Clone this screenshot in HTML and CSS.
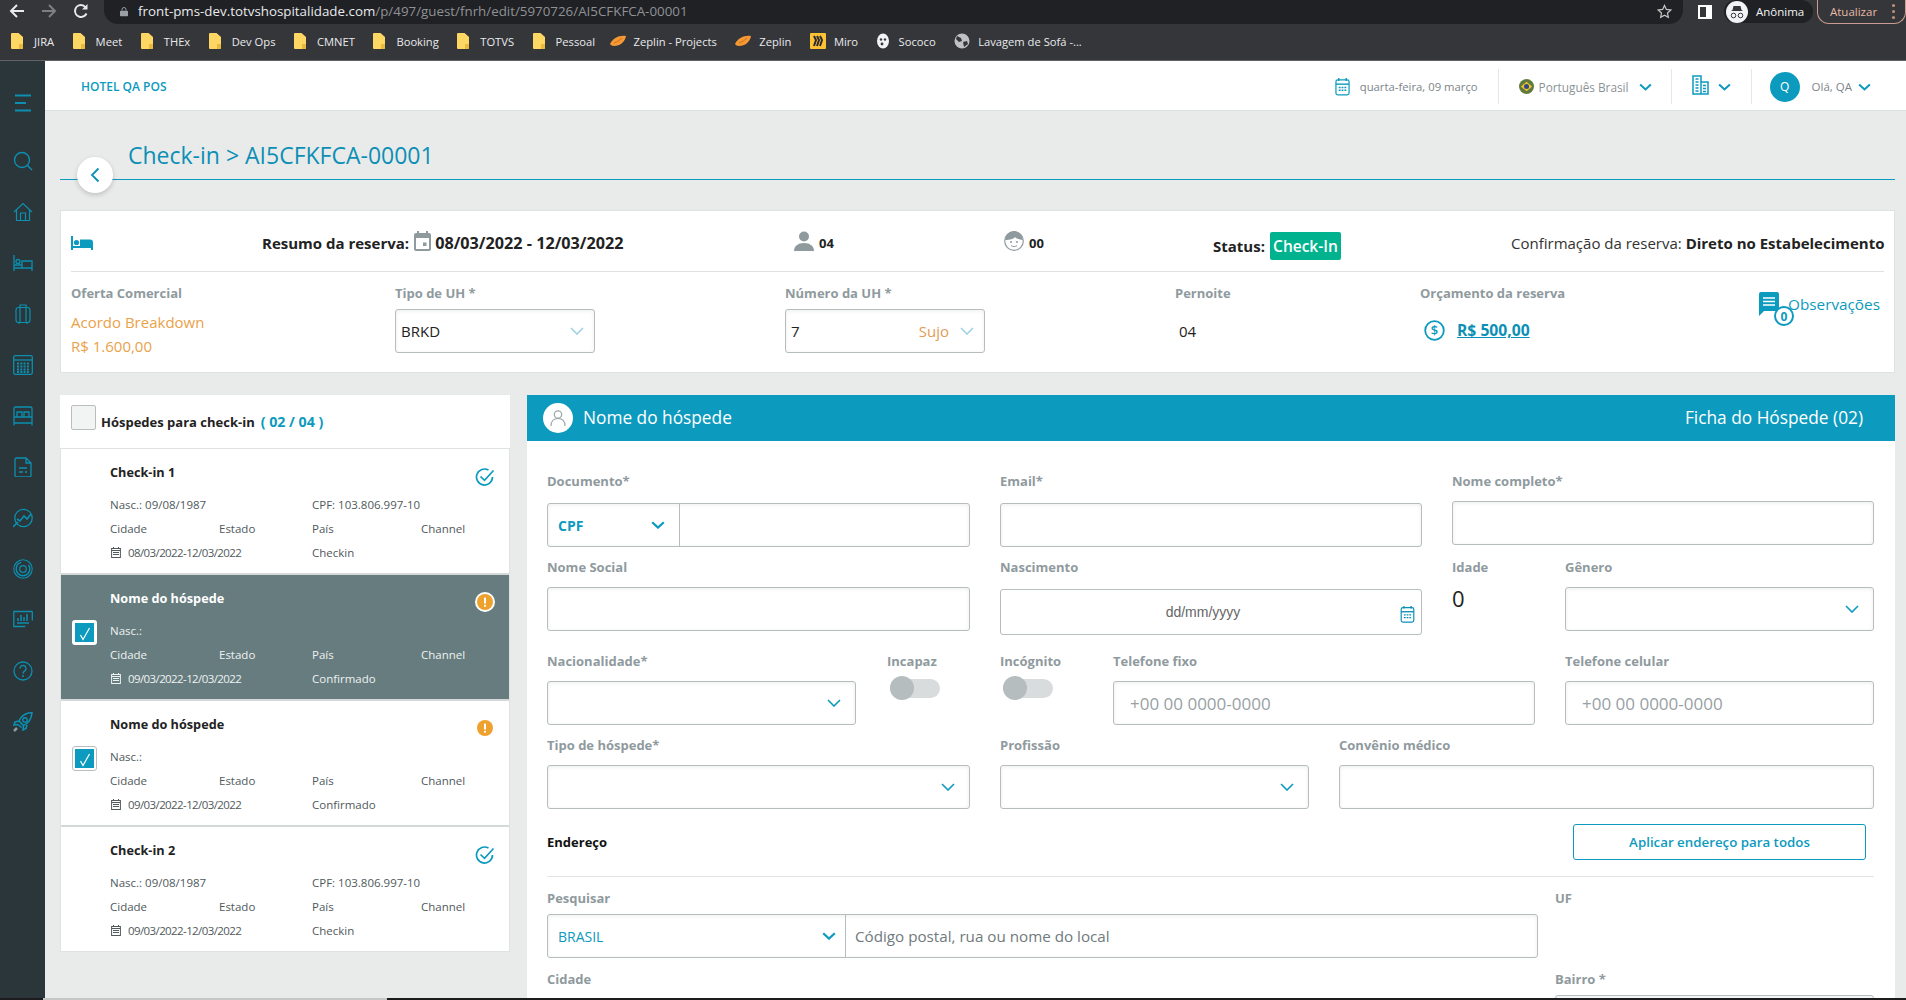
FILE: index.html
```html
<!DOCTYPE html>
<html lang="pt-BR">
<head>
<meta charset="utf-8">
<title>Check-in</title>
<link rel="stylesheet" href="styles.css">
</head>
<body>
<svg class="defs" xmlns="http://www.w3.org/2000/svg">
  <symbol id="chev" viewBox="0 0 14 8"><path d="M1 1l6 6 6-6" fill="none" stroke="currentColor" stroke-width="1.6"/></symbol>
  <symbol id="chevb" viewBox="0 0 14 8"><path d="M1.2 1.2L7 6.6l5.8-5.4" fill="none" stroke="currentColor" stroke-width="2.2"/></symbol>
  <symbol id="folder" viewBox="0 0 12 16"><path d="M0 1a1 1 0 011-1h6.500L12 4v11a1 1 0 01-1 1H1a1 1 0 01-1-1z" fill="#fdd663"/><path d="M8 16v-5h4v3a2 2 0 01-2 2z" fill="#e8b93c"/></symbol>
  <symbol id="zeplin" viewBox="0 0 16 12"><path d="M0 9C3 3 9 0 16 1c-1 6-6 10-12 10-2 0-3-1-4-2z" fill="#f69833"/><path d="M4 8c3-1 6-3 8-5" stroke="#c9701a" fill="none"/></symbol>
  <symbol id="cal" viewBox="0 0 16 20"><rect x="1" y="3" width="14" height="16" rx="2" fill="none" stroke="currentColor" stroke-width="1.300"/><path d="M1 7.500h14" stroke="currentColor" stroke-width="1.500"/><path d="M4 1v3M12 1v3" stroke="currentColor" stroke-width="1.500"/><path d="M4 11h2M7 11h2M10 11h2M4 14h2M7 14h2M10 14h2" stroke="currentColor" stroke-width="1.500"/></symbol>
  <symbol id="mini" viewBox="0 0 10 11"><rect x=".6" y="1.500" width="8.800" height="9" fill="none" stroke="currentColor"/><path d="M.5 3.500h9M2.500 0v2M7.500 0v2M2 5.500h6M2 7.500h6" stroke="currentColor"/></symbol>
  <symbol id="check" viewBox="0 0 20 20"><path d="M17.500 10a8 8 0 11-4-6.900" fill="none" stroke="#0c9abe" stroke-width="1.700"/><path d="M5.500 9.500l4 3.800L18.500 3.500" fill="none" stroke="#0c9abe" stroke-width="1.700"/></symbol>
  <symbol id="warn" viewBox="0 0 16 16"><circle cx="8" cy="8" r="8" fill="#efa12d"/><rect x="7" y="3.500" width="2" height="6" rx=".6" fill="#fff"/><rect x="7" y="10.700" width="2" height="2" rx=".6" fill="#fff"/></symbol>
  <symbol id="tick" viewBox="0 0 12 14"><path d="M1.500 8l2.500 4.500L10.500 1" fill="none" stroke="#fff" stroke-width="1.200"/></symbol>
</svg>

<div class="chrome">
  <div class="nav">
    <svg class="nav-ic" viewBox="0 0 16 16"><path d="M15 8H2M8 2L2 8l6 6" fill="none" stroke="#e8eaed" stroke-width="2"/></svg>
    <svg class="nav-ic dim" viewBox="0 0 16 16"><path d="M1 8h13M8 2l6 6-6 6" fill="none" stroke="#7d8083" stroke-width="2"/></svg>
    <svg class="nav-ic" viewBox="0 0 16 16"><path d="M13.500 10.500A6 6 0 118 2c2 0 3.500 1 4.500 2.300" fill="none" stroke="#e8eaed" stroke-width="2"/><path d="M14.500 1v5.500H9z" fill="#e8eaed"/></svg>
    <div class="urlbar">
      <svg class="lock" viewBox="0 0 10 12"><path d="M2.500 5V3.500a2.500 2.500 0 015 0V5" fill="none" stroke="#9aa0a6" stroke-width="1.200"/><rect y="5" width="10" height="7" rx="1" fill="#9aa0a6"/></svg>
      <span class="url"><span class="url-host">front-pms-dev.totvshospitalidade.com</span>/p/497/guest/fnrh/edit/5970726/AI5CFKFCA-00001</span>
      <svg class="star" viewBox="0 0 16 16"><path d="M8 1.500l2 4.300 4.700.6-3.500 3.200.9 4.700L8 12l-4.100 2.300.9-4.700L1.300 6.400 6 5.800z" fill="none" stroke="#c4c7c5" stroke-width="1.300"/></svg>
    </div>
    <svg class="panel-ic" viewBox="0 0 14 14"><rect width="14" height="14" fill="#fff"/><rect x="2" y="2" width="6" height="10" fill="#35363a"/></svg>
    <div class="incog">
      <svg class="incog-ic" viewBox="0 0 22 22"><circle cx="11" cy="11" r="11" fill="#f1f3f4"/><path d="M5 10h12l-1.500-1-1-4H7.500l-1 4z" fill="#35363a"/><circle cx="7.500" cy="14.500" r="2.300" fill="none" stroke="#35363a"/><circle cx="14.500" cy="14.500" r="2.300" fill="none" stroke="#35363a"/></svg>
      <span>Anônima</span>
    </div>
    <div class="update"><span>Atualizar</span><i class="dots"></i></div>
  </div>
  <div class="bookmarks">
    <span class="bm"><svg class="bm-f"><use href="#folder"/></svg>JIRA</span>
    <span class="bm"><svg class="bm-f"><use href="#folder"/></svg>Meet</span>
    <span class="bm"><svg class="bm-f"><use href="#folder"/></svg>THEx</span>
    <span class="bm"><svg class="bm-f"><use href="#folder"/></svg>Dev Ops</span>
    <span class="bm"><svg class="bm-f"><use href="#folder"/></svg>CMNET</span>
    <span class="bm"><svg class="bm-f"><use href="#folder"/></svg>Booking</span>
    <span class="bm"><svg class="bm-f"><use href="#folder"/></svg>TOTVS</span>
    <span class="bm"><svg class="bm-f"><use href="#folder"/></svg>Pessoal</span>
    <span class="bm bm-first"><svg class="bm-z"><use href="#zeplin"/></svg>Zeplin - Projects</span>
    <span class="bm"><svg class="bm-z"><use href="#zeplin"/></svg>Zeplin</span>
    <span class="bm"><svg class="bm-z" viewBox="0 0 16 16"><rect width="16" height="16" rx="1" fill="#ffc233"/><path d="M4 3l2 4-2 6M7 3l2 4-2 6M10 3l2 4-2 6" fill="none" stroke="#2b2a33" stroke-width="2"/></svg>Miro</span>
    <span class="bm"><svg class="bm-s" viewBox="0 0 12 16"><ellipse cx="6" cy="8" rx="6" ry="7.500" fill="#f1f3f4"/><circle cx="4" cy="6.500" r="1.200" fill="#35363a"/><circle cx="8" cy="6.500" r="1.200" fill="#35363a"/><circle cx="5" cy="11" r="1.400" fill="#35363a"/></svg>Sococo</span>
    <span class="bm"><svg class="bm-z" viewBox="0 0 16 16"><circle cx="8" cy="8" r="7.500" fill="#bdc1c6"/><path d="M3 3l4 2 1 3-3 1-3-3zM9 9l4-1 1 3-4 3z" fill="#35363a"/></svg>Lavagem de Sofá -...</span>
  </div>
</div>

<div class="app">
  <nav class="rail">
    <svg class="rail-ic" viewBox="0 0 20 20"><path d="M2 2.500h16M2 10h11M2 17.500h16" fill="none" stroke="currentColor" stroke-width="1.800"/></svg>
    <svg class="rail-ic rail-search" viewBox="0 0 20 20"><circle cx="9" cy="9" r="7.500" fill="none" stroke="currentColor" stroke-width="1.400"/><path d="M14.500 14.500l4.500 4.500" stroke="currentColor" stroke-width="1.400"/></svg>
    <svg class="rail-ic" viewBox="0 0 20 20"><path d="M1 10l9-8.500 9 8.500M3.500 8v10.500h13V8M7.500 18.500V11h5v7.500" fill="none" stroke="currentColor" stroke-width="1.200"/></svg>
    <svg class="rail-ic" viewBox="0 0 20 20"><path d="M1 2v16M1 15h18v3M19 15V8H9v7M1 12h8" fill="none" stroke="currentColor" stroke-width="1.300"/><circle cx="5" cy="8.500" r="2" fill="none" stroke="currentColor" stroke-width="1.300"/></svg>
    <svg class="rail-ic" viewBox="0 0 20 20"><rect x="3" y="3.500" width="14" height="15" rx="2.500" fill="none" stroke="currentColor" stroke-width="1.200"/><path d="M7 3.500V1h6v2.500M7 3.500v15M13 3.500v15M6 19v1M14 19v1" fill="none" stroke="currentColor" stroke-width="1.200"/></svg>
    <svg class="rail-ic" viewBox="0 0 20 20"><rect x=".7" y=".7" width="18.600" height="18.600" rx="1.500" fill="none" stroke="currentColor" stroke-width="1.300"/><path d="M1 5h18" stroke="currentColor" stroke-width="1.300"/><path d="M4 8.500h12M4 11.500h12M4 14.500h12M4 17h12" stroke="currentColor" stroke-width="1.800" stroke-dasharray="2 1.300"/></svg>
    <svg class="rail-ic" viewBox="0 0 20 20"><path d="M1 11V2.500A1.500 1.500 0 012.500 1h15A1.500 1.500 0 0119 2.500V11M1 11h18v6H1zM1 17v2.500M19 17v2.500M4 11V6h5v5M11 11V6h5v5" fill="none" stroke="currentColor" stroke-width="1.300"/></svg>
    <svg class="rail-ic" viewBox="0 0 20 20"><path d="M2 2.500A1.500 1.500 0 013.500 1H13l5 5v12.500a1.500 1.500 0 01-1.500 1.500h-13A1.500 1.500 0 012 18.500zM13 1v5h5M6 11h8M6 15h4M12 15h2" fill="none" stroke="currentColor" stroke-width="1.300"/></svg>
    <svg class="rail-ic" viewBox="0 0 20 20"><circle cx="10.500" cy="10" r="8.700" fill="none" stroke="currentColor" stroke-width="1.300"/><path d="M0 19l5-5M4 11l3 2 4-5 3 3 4-5" fill="none" stroke="currentColor" stroke-width="1.600"/></svg>
    <svg class="rail-ic" viewBox="0 0 20 20"><circle cx="10" cy="10" r="9.200" fill="none" stroke="currentColor" stroke-width="1.100"/><circle cx="10" cy="10" r="6.800" fill="none" stroke="currentColor" stroke-width="1.400" stroke-dasharray="30 8"/><circle cx="10" cy="10" r="3.300" fill="none" stroke="currentColor" stroke-width="1.200"/></svg>
    <svg class="rail-ic" viewBox="0 0 20 20"><path d="M19.500 1.500H.8v15h11.500M19.300 1.500v9" fill="none" stroke="currentColor" stroke-width="1.300"/><path d="M4 13h12M5 11V8M8 11V5M11 11V7M14 11V4" fill="none" stroke="currentColor" stroke-width="1.500"/></svg>
    <svg class="rail-ic" viewBox="0 0 20 20"><circle cx="10" cy="10" r="9" fill="none" stroke="currentColor" stroke-width="1.300"/><path d="M7 7.500a3 3 0 115 2.200c-1.300.9-2 1.500-2 3" fill="none" stroke="currentColor" stroke-width="1.400"/><circle cx="10" cy="15" r="1" fill="currentColor"/></svg>
    <svg class="rail-ic" viewBox="0 0 20 20"><path d="M6 9c2-5 7-8 13-8.500-.5 6-3.500 11-8.500 13zM6 9L2 10l-1 3 4-.5M10.500 13.500L10 18l3-1.500 1-3.500M5 12.500l3.500 3" fill="none" stroke="currentColor" stroke-width="1.600"/><circle cx="12" cy="8" r="2.200" fill="none" stroke="currentColor" stroke-width="1.400"/><path d="M1 19l3-3" stroke="#8a9aa0" stroke-width="2.500"/></svg>
  </nav>

  <div class="workspace">
    <header class="topbar">
      <div class="hotel">HOTEL QA POS</div>
      <div class="top-right">
        <div class="top-item top-date">
          <svg class="top-cal"><use href="#cal"/></svg>
          <span>quarta-feira, 09 março</span>
        </div>
        <div class="top-item top-lang">
          <svg class="flag" viewBox="0 0 16 16"><circle cx="8" cy="8" r="8" fill="#5f7a3a"/><path d="M8 3l6 5-6 5-6-5z" fill="#f2c230"/><circle cx="8" cy="8" r="2.700" fill="#2c4a85"/></svg>
          <span class="lang">Português Brasil</span>
          <svg class="top-chev"><use href="#chevb"/></svg>
        </div>
        <div class="top-item top-prop">
          <svg class="bld" viewBox="0 0 17 20"><path d="M1 19V1h8v18zM9 7h7v12H9M3.500 4h3M3.500 7h3M3.500 10h3M3.500 13h3M3.500 16h3M11 10.500h3M11 13.500h3M11 16.500h3" fill="none" stroke="currentColor" stroke-width="1.500"/></svg>
          <svg class="top-chev"><use href="#chevb"/></svg>
        </div>
        <div class="top-user">
          <span class="avatar">Q</span>
          <span class="hello">Olá, QA</span>
          <svg class="top-chev"><use href="#chevb"/></svg>
        </div>
      </div>
    </header>

    <main class="main">
      <div class="page-head">
        <h1 class="page-title">Check-in &gt; AI5CFKFCA-00001</h1>
        <button class="back" type="button" aria-label="Voltar"><svg viewBox="0 0 10 16"><path d="M8.500 1.500L2 8l6.500 6.500" fill="none" stroke="#0c8fb5" stroke-width="1.800"/></svg></button>
      </div>

      <section class="summary">
        <div class="sum-top">
          <svg class="sum-bed" viewBox="0 0 22 14"><path d="M1 0v14M1 11h20v3M21 11V6.500a2 2 0 00-2-2h-9v6.500" fill="none" stroke="#0c9abe" stroke-width="2"/><path d="M10 5h10v6H10z" fill="#0c9abe"/><circle cx="5.500" cy="6.500" r="2.600" fill="#0c9abe"/></svg>
          <div class="sum-res">
            <strong>Resumo da reserva:</strong>
            <svg class="sum-cal" viewBox="0 0 17 20"><rect y="2" width="17" height="18" rx="2" fill="#8f9a9e"/><rect x="2" y="7" width="13" height="11" fill="#fff"/><rect x="9" y="11.500" width="3.500" height="3.500" fill="#8f9a9e"/><rect x="3" width="2" height="4" fill="#8f9a9e"/><rect x="12" width="2" height="4" fill="#8f9a9e"/></svg>
            <strong class="sum-dates">08/03/2022 - 12/03/2022</strong>
          </div>
          <div class="sum-pax">
            <svg class="pax" viewBox="0 0 20 20"><circle cx="10" cy="5.500" r="5" fill="#8f9a9e"/><path d="M0 20c0-5 4-8 10-8s10 3 10 8z" fill="#8f9a9e"/></svg>
            <strong>04</strong>
          </div>
          <div class="sum-pax">
            <svg class="pax" viewBox="0 0 20 20"><circle cx="10" cy="10" r="9.300" fill="#fff" stroke="#8f9a9e" stroke-width="1.200"/><path d="M1 9C2 3 6 .5 10 .5S18 3 19 9c-3 0-6-1-8-3-1 2-5 3-10 3z" fill="#8f9a9e"/><circle cx="7" cy="11" r="1" fill="#8f9a9e"/><circle cx="13" cy="11" r="1" fill="#8f9a9e"/><path d="M7 14.500c2 1.500 4 1.500 6 0" fill="none" stroke="#8f9a9e"/></svg>
            <strong>00</strong>
          </div>
          <div class="sum-status"><strong>Status:</strong><span class="badge">Check-In</span></div>
          <div class="sum-conf">Confirmação da reserva: <strong>Direto no Estabelecimento</strong></div>
        </div>
        <div class="sum-bottom">
          <div>
            <div class="lab">Oferta Comercial</div>
            <div class="offer">Acordo Breakdown<br>R$ 1.600,00</div>
          </div>
          <div>
            <div class="lab">Tipo de UH *</div>
            <div class="ctl ctl-uh"><span>BRKD</span><svg class="chv pale"><use href="#chev"/></svg></div>
          </div>
          <div>
            <div class="lab">Número da UH *</div>
            <div class="ctl ctl-uh"><span>7</span><span class="dirty">Sujo</span><svg class="chv pale"><use href="#chev"/></svg></div>
          </div>
          <div>
            <div class="lab">Pernoite</div>
            <div class="nights">04</div>
          </div>
          <div>
            <div class="lab">Orçamento da reserva</div>
            <div class="budget">
              <svg class="dollar" viewBox="0 0 21 21"><circle cx="10.500" cy="10.500" r="9.300" fill="none" stroke="#0c9abe" stroke-width="1.800"/><text x="10.500" y="15" text-anchor="middle" class="dollar-t">$</text></svg>
              <a class="budget-v" href="#">R$ 500,00</a>
            </div>
          </div>
          <div class="obs">
            <svg class="obs-ic" viewBox="0 0 20 24"><path d="M2 0h16a2 2 0 012 2v15a2 2 0 01-2 2H5l-5 5V2a2 2 0 012-2z" fill="#0c9abe"/><path d="M4 6h12M4 9.500h12M4 13h12" stroke="#fff" stroke-width="1.600"/></svg>
            <span class="obs-badge">0</span>
            <span class="obs-t">Observações</span>
          </div>
        </div>
      </section>

      <div class="content">
        <aside class="guests">
          <div class="guests-head">
            <span class="box"></span>
            <strong>Hóspedes para check-in</strong>
            <strong class="count">( 02 / 04 )</strong>
          </div>
          <div class="guest-list">
            <article class="guest">
              <div class="g-sel"></div>
              <div class="g-body">
                <div class="g-title">Check-in 1</div>
                <div class="g-grid">
                  <span class="g-two">Nasc.: 09/08/1987</span><span class="g-two">CPF: 103.806.997-10</span>
                  <span>Cidade</span><span>Estado</span><span>País</span><span>Channel</span>
                  <span class="g-two g-date"><svg class="g-cal"><use href="#mini"/></svg>08/03/2022-12/03/2022</span><span class="g-two">Checkin</span>
                </div>
              </div>
              <div class="g-state"><svg class="st"><use href="#check"/></svg></div>
            </article>
            <article class="guest guest-on">
              <div class="g-sel"><span class="cb cb-on"><svg><use href="#tick"/></svg></span></div>
              <div class="g-body">
                <div class="g-title">Nome do hóspede</div>
                <div class="g-grid">
                  <span class="g-two">Nasc.:</span><span class="g-two">&nbsp;</span>
                  <span>Cidade</span><span>Estado</span><span>País</span><span>Channel</span>
                  <span class="g-two g-date"><svg class="g-cal"><use href="#mini"/></svg>09/03/2022-12/03/2022</span><span class="g-two">Confirmado</span>
                </div>
              </div>
              <div class="g-state"><span class="warn-ring"><svg><use href="#warn"/></svg></span></div>
            </article>
            <article class="guest">
              <div class="g-sel"><span class="cb"><svg><use href="#tick"/></svg></span></div>
              <div class="g-body">
                <div class="g-title">Nome do hóspede</div>
                <div class="g-grid">
                  <span class="g-two">Nasc.:</span><span class="g-two">&nbsp;</span>
                  <span>Cidade</span><span>Estado</span><span>País</span><span>Channel</span>
                  <span class="g-two g-date"><svg class="g-cal"><use href="#mini"/></svg>09/03/2022-12/03/2022</span><span class="g-two">Confirmado</span>
                </div>
              </div>
              <div class="g-state"><svg class="st-warn"><use href="#warn"/></svg></div>
            </article>
            <article class="guest guest-last">
              <div class="g-sel"></div>
              <div class="g-body">
                <div class="g-title">Check-in 2</div>
                <div class="g-grid">
                  <span class="g-two">Nasc.: 09/08/1987</span><span class="g-two">CPF: 103.806.997-10</span>
                  <span>Cidade</span><span>Estado</span><span>País</span><span>Channel</span>
                  <span class="g-two g-date"><svg class="g-cal"><use href="#mini"/></svg>09/03/2022-12/03/2022</span><span class="g-two">Checkin</span>
                </div>
              </div>
              <div class="g-state"><svg class="st"><use href="#check"/></svg></div>
            </article>
          </div>
        </aside>

        <section class="form">
          <div class="form-head">
            <span class="form-av"><svg viewBox="0 0 18 18"><circle cx="9" cy="5.500" r="3.700" fill="none" stroke="#9aa5a9" stroke-width="1.200"/><path d="M2 17c0-5 3-7.500 7-7.500s7 2.500 7 7.500" fill="none" stroke="#9aa5a9" stroke-width="1.200"/></svg></span>
            <span class="form-name">Nome do hóspede</span>
            <span class="form-ficha">Ficha do Hóspede (02)</span>
          </div>
          <div class="form-body">
            <div class="row row-1">
              <div>
                <label class="lab">Documento*</label>
                <div class="ctl ctl-doc m13">
                  <div class="seg seg-doc"><b class="teal">CPF</b><svg class="chv teal"><use href="#chevb"/></svg></div>
                  <input class="inp-bare" type="text">
                </div>
              </div>
              <div>
                <label class="lab">Email*</label>
                <input class="inp m13" type="text">
              </div>
              <div>
                <label class="lab">Nome completo*</label>
                <input class="inp m11" type="text">
              </div>
            </div>
            <div class="row row-2">
              <div>
                <label class="lab">Nome Social</label>
                <input class="inp m11" type="text">
              </div>
              <div>
                <label class="lab">Nascimento</label>
                <div class="ctl ctl-date m13"><span class="date-ph">dd/mm/yyyy</span><svg class="date-ic"><use href="#cal"/></svg></div>
              </div>
              <div class="sub-age">
                <div>
                  <label class="lab">Idade</label>
                  <div class="age">0</div>
                </div>
                <div>
                  <label class="lab">Gênero</label>
                  <div class="ctl ctl-sel m11"><svg class="chv teal"><use href="#chev"/></svg></div>
                </div>
              </div>
            </div>
            <div class="row row-3">
              <div>
                <label class="lab">Nacionalidade*</label>
                <div class="ctl ctl-sel m11"><svg class="chv teal"><use href="#chev"/></svg></div>
              </div>
              <div class="col-incapaz">
                <label class="lab">Incapaz</label>
                <div class="toggle"></div>
              </div>
              <div>
                <label class="lab">Incógnito</label>
                <div class="toggle"></div>
              </div>
              <div>
                <label class="lab">Telefone fixo</label>
                <input class="inp inp-ph m11" type="text" placeholder="+00 00 0000-0000">
              </div>
              <div>
                <label class="lab">Telefone celular</label>
                <input class="inp inp-ph m11" type="text" placeholder="+00 00 0000-0000">
              </div>
            </div>
            <div class="row row-4">
              <div>
                <label class="lab">Tipo de hóspede*</label>
                <div class="ctl ctl-sel m11"><svg class="chv teal"><use href="#chev"/></svg></div>
              </div>
              <div>
                <label class="lab">Profissão</label>
                <div class="ctl ctl-sel m11"><svg class="chv teal"><use href="#chev"/></svg></div>
              </div>
              <div>
                <label class="lab">Convênio médico</label>
                <input class="inp m11" type="text">
              </div>
            </div>
            <div class="addr-head">
              <strong>Endereço</strong>
              <button class="apply" type="button">Aplicar endereço para todos</button>
            </div>
            <div class="row row-5">
              <div>
                <label class="lab">Pesquisar</label>
                <div class="ctl ctl-doc m7">
                  <div class="seg seg-br"><span class="teal">BRASIL</span><svg class="chv teal"><use href="#chevb"/></svg></div>
                  <input class="inp-bare inp-addr" type="text" placeholder="Código postal, rua ou nome do local">
                </div>
              </div>
              <div>
                <label class="lab">UF</label>
              </div>
            </div>
            <div class="row row-5 row-6">
              <div>
                <label class="lab">Cidade</label>
              </div>
              <div>
                <label class="lab">Bairro *</label>
                <input class="inp inp-bairro m7" type="text">
              </div>
            </div>
          </div>
        </section>
      </div>
    </main>
  </div>
</div>
<div class="taskbar"><span class="task-on"></span></div>
</body>
</html>
```
FILE: styles.css
```css
* { box-sizing: border-box; }
html, body { margin: 0; height: 1000px; overflow: hidden; }
body { font-family: "Open Sans", "Liberation Sans", sans-serif; color: #222; background: #e9ebeb; display: flex; flex-direction: column; position: relative; }
.defs { display: none; }

/* browser chrome */
.chrome { height: 61px; flex: none; background: #35363a; border-bottom: 1px solid #5f6368; font-family: "Open Sans", sans-serif; }
.nav { height: 24px; display: flex; align-items: flex-start; }
.nav-ic { width: 16px; height: 16px; margin: 3px 16px 0 0; flex: none; }
.nav-ic:first-child { margin-left: 9px; }
.urlbar { width: 1579px; height: 24px; margin-left: -1px; margin-right: 15px; background: #202124; border-radius: 0 0 14px 14px; display: flex; align-items: center; padding: 0 11px 0 16px; flex: none; }
.lock { width: 8px; height: 11px; flex: none; margin-right: 10px; margin-top: -2px; }
.url { font-size: 13.350px; color: #8f9296; flex: 1; white-space: nowrap; margin-top: -2px; }
.url-host { color: #e8eaed; }
.star { width: 15px; height: 15px; flex: none; margin-top: -2px; }
.panel-ic { width: 14px; height: 14px; margin-top: 5px; flex: none; }
.incog { margin-left: 12px; width: 89px; height: 23px; background: #202124; border-radius: 12px; display: flex; align-items: center; color: #f1f3f4; font-size: 11.500px; padding-left: 2px; flex: none; }
.incog-ic { width: 22px; height: 22px; margin-right: 8px; }
.update { margin-left: 4px; flex: 1; height: 24px; border: 1px solid #c99d91; border-radius: 0 0 12px 12px; border-top: 0; display: flex; align-items: center; padding-left: 12px; color: #e6b8a6; font-size: 11.500px; justify-content: space-between; padding-right: 10px; }
.dots { width: 3px; height: 3px; border-radius: 50%; background: #c08f80; box-shadow: 0 -6px 0 #c08f80, 0 6px 0 #c08f80; }
.bookmarks { height: 36px; display: flex; align-items: center; gap: 18.500px; padding-left: 11px; padding-bottom: 2px; color: #e8eaed; font-size: 11.200px; white-space: nowrap; }
.bm { display: flex; align-items: center; }
.bm-first { margin-left: -4px; }
.bm-f { width: 12px; height: 16px; margin-right: 11px; flex: none; }
.bm-z { width: 16px; height: 16px; margin-right: 8px; flex: none; }
.bm-s { width: 12px; height: 16px; margin-right: 10px; flex: none; }

/* app frame */
.app { flex: 1; min-height: 0; display: flex; }
.rail { width: 45px; flex: none; background: #2a3639; color: #0c8fb0; display: flex; flex-direction: column; align-items: center; padding-top: 32px; gap: 31px; }
.rail-ic { width: 20px; height: 20px; flex: none; }
.rail-search { margin-top: 7px; }
.workspace { flex: 1; min-width: 0; display: flex; flex-direction: column; }
.topbar { height: 50px; flex: none; background: #fff; border-bottom: 1px solid #dfe2e2; display: flex; align-items: center; justify-content: space-between; padding-left: 36px; padding-right: 35px; }
.hotel { font-size: 12px; font-weight: 600; color: #0c9abe; margin-top: 1px; }
.top-right { display: flex; align-items: center; height: 35px; margin-top: 2px; }
.top-item { display: flex; align-items: center; height: 35px; border-right: 1px solid #e6e8e8; font-size: 11.300px; color: #7c8589; }
.top-date { padding-right: 20px; }
.top-cal { width: 15px; height: 19px; color: #0c9abe; margin-right: 10px; }
.top-lang { padding-left: 20px; padding-right: 19px; font-size: 11.800px; }
.flag { width: 15px; height: 15px; margin-right: 5px; }
.lang { margin-right: 10px; color: #8a9396; }
.top-chev { width: 13px; height: 8px; color: #0c9abe; flex: none; }
.top-prop { padding-left: 20px; padding-right: 20px; }
.bld { width: 17px; height: 20px; color: #0c9abe; margin-right: 9px; margin-top: -4px; }
.top-user { display: flex; align-items: center; padding-left: 18px; font-size: 11.500px; color: #7c8589; }
.avatar { width: 30px; height: 30px; border-radius: 50%; background: #0c9abe; color: #fff; display: flex; align-items: center; justify-content: center; font-size: 12px; margin-right: 12px; }
.hello { margin-right: 6px; }

/* main */
.main { flex: 1; min-height: 0; overflow: hidden; padding: 0 11px 0 15px; }
.page-head { position: relative; padding: 30px 0 9px 68px; border-bottom: 1px solid #0c9abe; margin-bottom: 30px; height: 69px; }
.page-title { margin: 0; font-size: 23px; line-height: 29px; font-weight: 400; color: #0c8fb5; }
.back { position: absolute; left: 17px; top: 46px; width: 36px; height: 36px; border-radius: 50%; border: 0; background: #fff; box-shadow: 0 2px 5px rgba(0,0,0,.18); padding: 0; display: flex; align-items: center; justify-content: center; }
.back svg { width: 10px; height: 16px; }

.summary { background: #fff; border: 1px solid #dfe2e2; padding: 0 10px; height: 163px; margin-bottom: 22px; }
.sum-top { height: 61px; padding-top: 4px; border-bottom: 1px solid #dfe2e2; display: grid; grid-template-columns: 191px 532px 210px 209px 298px 1fr; align-items: center; font-size: 15px; white-space: nowrap; }
.sum-bed { width: 22px; height: 14px; }
.sum-res { display: flex; align-items: center; }
.sum-cal { width: 17px; height: 20px; margin: -4px 4px 0 5px; }
.sum-res .sum-dates { font-size: 16.200px; font-weight: 700; }
.sum-pax { display: flex; align-items: center; font-size: 13px; }
.pax { width: 20px; height: 20px; margin: -4px 5px 0 0; }
.sum-status { display: flex; align-items: center; margin-top: 6px; gap: 5px; }
.badge { height: 28px; width: 71px; border-radius: 2px; background: #00b28e; color: #fff; font-size: 15.500px; font-weight: 600; display: flex; align-items: center; justify-content: center; }
.sum-conf { justify-self: end; font-size: 15px; color: #333; }
.sum-conf strong { color: #222; }
.sum-bottom { display: grid; grid-template-columns: 324px 390px 390px 245px 339px 1fr; padding-top: 12px; }
.lab { display: block; font-size: 13px; line-height: 18px; font-weight: 700; color: #8f9a9e; white-space: nowrap; }
.offer { margin-top: 8px; font-size: 15px; line-height: 24px; color: #eaa24a; }
.ctl { display: flex; align-items: center; height: 44px; background: #fff; border: 1px solid #b6bdbf; border-radius: 3px; box-shadow: inset 0 1px 4px rgba(0,0,0,.07); }
.ctl-uh { width: 200px; margin-top: 7px; padding: 0 10px 0 5px; font-size: 15px; }
.ctl-uh span:first-child { flex: 1; }
.dirty { color: #e29c55; margin-right: 11px; }
.chv { width: 14px; height: 8px; flex: none; }
.pale { color: #9fd2e4; }
.teal { color: #0c9abe; }
.nights { margin-top: 7px; height: 44px; line-height: 44px; padding-left: 4px; font-size: 15px; }
.budget { margin-top: 6px; height: 44px; display: flex; align-items: center; padding-left: 4px; }
.dollar { width: 21px; height: 21px; margin-right: 12px; }
.dollar-t { font-size: 13px; font-weight: 600; fill: #0c9abe; font-family: "Open Sans", sans-serif; }
.budget-v { font-size: 15.700px; font-weight: 700; color: #0c8fb5; }
.obs { position: relative; display: flex; padding-top: 7px; }
.obs-ic { width: 20px; height: 24px; flex: none; margin-top: 1px; }
.obs-t { margin-left: 9px; font-size: 15.300px; line-height: 26px; color: #0c9abe; white-space: nowrap; }
.obs-badge { position: absolute; left: 15px; top: 22px; width: 20px; height: 20px; border-radius: 50%; background: #fff; border: 2.500px solid #0c9abe; color: #0c9abe; font-size: 12px; font-weight: 700; display: flex; align-items: center; justify-content: center; }

/* guests */
.content { display: flex; gap: 17px; align-items: flex-start; }
.guests { width: 450px; flex: none; }
.guests-head { height: 53px; background: #fff; display: flex; align-items: flex-start; padding: 10px 0 0 11px; font-size: 13px; line-height: 34px; }
.box { width: 25px; height: 25px; background: #f2f3f3; border: 1px solid #b9bfc1; border-radius: 2px; margin-right: 5px; flex: none; }
.count { color: #0c9abe; margin-left: 6px; font-size: 14.200px; }
.guest-list { border: 1px solid #dfe2e2; background: #fff; }
.guest { display: grid; grid-template-columns: 49px 361px 1fr; height: 126px; border-bottom: 2px solid #d5d8d8; font-size: 11.500px; color: #50595c; }
.guest-last { border-bottom: 0; height: 124px; }
.guest-on { background: #667c7e; color: #eef2f2; }
.g-sel { padding: 45px 0 0 11px; }
.cb { display: flex; align-items: center; justify-content: center; width: 25px; height: 25px; background: #0c9abe; border: 3px solid #fff; outline: 1px solid #b9bfc1; outline-offset: -1px; border-radius: 3px; }
.cb svg { width: 12px; height: 14px; margin-top: 3px; }
.cb-on { outline: 0; }
.g-body { padding-top: 14px; }
.g-title { font-size: 12.700px; font-weight: 700; line-height: 18px; margin-bottom: 11px; color: #222; }
.guest-on .g-title { color: #fff; }
.g-grid { display: grid; grid-template-columns: 109px 93px 109px 50px; grid-auto-rows: 24px; align-items: center; white-space: nowrap; }
.g-two { grid-column: span 2; display: flex; align-items: center; }
.g-date { letter-spacing: -.6px; }
.g-cal { width: 10px; height: 11px; margin: 0 7px 0 1px; flex: none; }
.g-state { padding: 18px 0 0 4px; }
.st { width: 20px; height: 20px; display: block; }
.warn-ring { display: block; width: 20px; height: 20px; margin-top: -1px; background: #fff; border-radius: 50%; padding: 2px; }
.warn-ring svg { width: 16px; height: 16px; display: block; }
.st-warn { width: 16px; height: 16px; display: block; margin: 1px 0 0 2px; }

/* form */
.form { flex: 1; min-width: 0; background: #fff; height: 605px; }
.form-head { height: 46px; background: #0c9abe; color: #fff; display: flex; align-items: center; padding: 0 32px 2px 16px; font-size: 17.300px; }
.form-av { width: 30px; height: 30px; border-radius: 50%; background: #fff; display: flex; align-items: center; justify-content: center; margin-right: 10px; margin-bottom: -2px; }
.form-av svg { width: 18px; height: 18px; }
.form-name { flex: 1; }
.form-body { padding: 31px 21px 0 20px; }
.row { display: grid; gap: 0 30px; }
.row-1 { grid-template-columns: 423px 422px 422px; margin-bottom: 11px; }
.row-2 { grid-template-columns: 423px 422px 422px; margin-bottom: 17px; }
.sub-age { display: grid; grid-template-columns: 83px 309px; gap: 30px; }
.row-3 { grid-template-columns: 309px 84px 83px 422px 309px; margin-bottom: 11px; }
.col-incapaz { padding-left: 1px; }
.row-4 { grid-template-columns: 423px 309px 535px; gap: 0 30px; margin-bottom: 15px; }
.m13 { margin-top: 13px; }
.m11 { margin-top: 11px; }
.m7 { margin-top: 7px; }
.inp { display: block; width: 100%; height: 44px; border: 1px solid #b6bdbf; border-radius: 3px; background: #fff; box-shadow: inset 0 1px 4px rgba(0,0,0,.07); padding: 0 16px; font: 14px "Open Sans", sans-serif; outline: 0; }
.inp-ph { font-size: 17px; }
.inp-ph::placeholder, .inp-addr::placeholder { color: #98a1a4; opacity: 1; }
.ctl-doc { padding: 0; }
.seg { display: flex; align-items: center; height: 100%; border-right: 1px solid #b6bdbf; flex: none; }
.seg-doc { width: 132px; padding: 0 14px 0 10px; font-size: 14px; }
.seg-doc b { flex: 1; font-weight: 700; }
.seg-br { width: 298px; padding: 0 9px 0 10px; font-size: 14px; }
.seg-br span { flex: 1; }
.inp-bare { flex: 1; min-width: 0; height: 100%; border: 0; background: transparent; outline: 0; padding: 0 9px; font: 15.200px "Open Sans", sans-serif; }
.inp-addr::placeholder { color: #6f7a7d; }
.ctl-date { height: 46px; position: relative; justify-content: center; box-shadow: none; padding-right: 0; }
.date-ph { font: 14px "Liberation Sans", sans-serif; color: #666; margin-left: -16px; }
.date-ic { position: absolute; right: 6px; top: 15px; width: 15px; height: 18px; color: #0c8fb5; }
.age { font-size: 22px; line-height: 30px; margin-top: 7px; }
.ctl-sel { justify-content: flex-end; padding-right: 14px; }
.toggle { position: relative; width: 50px; height: 19px; margin: 9px 0 0 3px; background: #d9dcdc; border-radius: 10px; }
.toggle::before { content: ""; position: absolute; left: 0; top: -3px; width: 24px; height: 24px; border-radius: 50%; background: #b5bdbf; }
.addr-head { height: 36px; display: flex; align-items: center; justify-content: space-between; font-size: 13px; color: #111; padding-right: 8px; margin-bottom: 16px; }
.apply { width: 293px; height: 36px; background: #fff; border: 1px solid #0c9abe; border-radius: 3px; color: #0c9abe; font: 600 13.300px "Open Sans", sans-serif; }
.row-5 { grid-template-columns: 991px 319px; gap: 0 17px; border-top: 1px solid #e3e5e5; padding-top: 12px; }
.row-6 { border-top: 0; }
.inp-bairro { height: 44px; }
.taskbar { position: absolute; left: 0; right: 0; bottom: 0; height: 2px; background: #1c1c1e; }
.task-on { display: block; width: 344px; height: 2px; margin-left: 43px; background: #c4c7c8; }
```
